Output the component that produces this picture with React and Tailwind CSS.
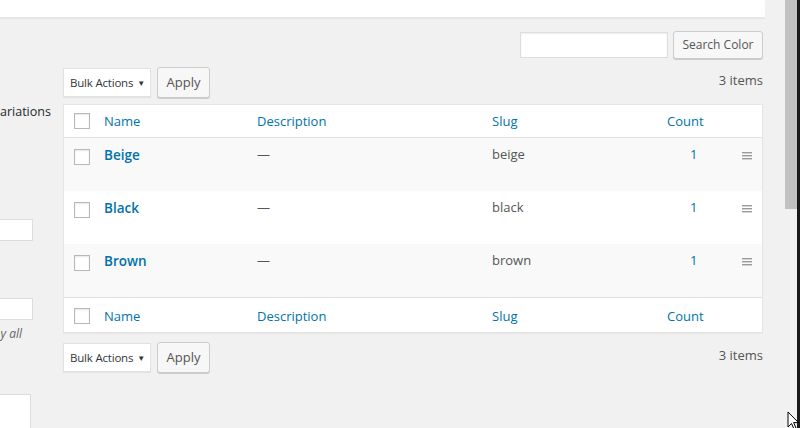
import React from 'react';

const font = { fontFamily: '"Open Sans", "Liberation Sans", sans-serif' };

const rows = [
    { name: 'Beige', slug: 'beige', count: 1, bg: 'bg-[#f9f9f9]' },
    { name: 'Black', slug: 'black', count: 1, bg: 'bg-white' },
    { name: 'Brown', slug: 'brown', count: 1, bg: 'bg-[#f9f9f9]' },
];

const Checkbox = () => (
    <span className="block w-4 h-4 bg-white border border-[#b4b9be] shadow-[inset_0_1px_2px_rgba(0,0,0,0.1)]" />
);

const Handle = () => (
    <svg width="10" height="8" viewBox="0 0 10 8" className="block">
        <rect x="0" y="0" width="10" height="1.4" fill="#9a9a9a" />
        <rect x="0" y="3" width="10" height="1.4" fill="#9a9a9a" />
        <rect x="0" y="6" width="10" height="1.4" fill="#9a9a9a" />
    </svg>
);

const HeadRow = ({ className }) => (
    <div className={`flex items-start bg-white ${className}`}>
        <div className="w-[40px] pl-[10px]"><Checkbox /></div>
        <div className="w-[153px] text-[#0073aa] leading-[16px]">Name</div>
        <div className="w-[235px] text-[#0073aa] leading-[16px]">Description</div>
        <div className="w-[175px] text-[#0073aa] leading-[16px]">Slug</div>
        <div className="w-[60px] text-[#0073aa] leading-[16px]">Count</div>
        <div className="flex-1" />
    </div>
);

const Toolbar = () => (
    <div className="flex items-center gap-[6px]">
        <div className="flex items-center justify-between w-[88px] h-[29px] bg-white border border-[#e2e2e2] shadow-[0_1px_1px_rgba(0,0,0,0.05)] pl-[6px] pr-[5px] text-[11.5px] tracking-[-0.2px] whitespace-nowrap text-[#32373c]">
            <span>Bulk Actions</span>
            <span className="text-[8px]">▼</span>
        </div>
        <div className="flex items-center justify-center w-[53px] h-[31px] bg-[#f7f7f7] border border-[#cccccc] rounded-[3px] shadow-[0_1px_0_#cccccc] text-[13px] text-[#555]">
            Apply
        </div>
    </div>
);

export default function App() {
    return (
        <div className="relative w-[800px] h-[428px] bg-[#f1f1f1] overflow-hidden flex text-[13px]" style={font}>
            <div className="w-[785px] flex flex-col">
                <div className="w-[765px] h-[18px] bg-white border-b border-[#e5e5e5] shadow-[0_1px_1px_rgba(0,0,0,0.04)] shrink-0" />
                <div className="flex">
                    <div className="w-[63px] shrink-0 flex flex-col text-[#23282d]">
                        <div className="h-[84px]" />
                        <div className="leading-[20px] text-[12.5px]">ariations</div>
                        <div className="h-[97px]" />
                        <div className="w-[33px] h-[22px] bg-white border border-[#dddddd] border-l-0" />
                        <div className="h-[57px]" />
                        <div className="w-[33px] h-[22px] bg-white border border-[#dddddd] border-l-0" />
                        <div className="italic text-[#666] text-[12px] leading-[28px] w-[22px] text-right">y all</div>
                        <div className="h-[46px]" />
                        <div className="w-[31px] h-[50px] bg-white border border-[#dddddd] border-l-0" />
                    </div>
                    <div className="w-[700px] shrink-0 flex flex-col">
                        <div className="flex justify-end items-center gap-[5px] mt-[13px] h-[28px]">
                            <div className="w-[148px] h-[26px] bg-white border border-[#dddddd] shadow-[inset_0_1px_2px_rgba(0,0,0,0.07)]" />
                            <div className="flex items-center justify-center w-[90px] h-[28px] bg-[#f7f7f7] border border-[#cccccc] rounded-[3px] shadow-[0_1px_0_#cccccc] text-[12px] text-[#555]">
                                Search Color
                            </div>
                        </div>
                        <div className="flex justify-between items-center mt-[8px]">
                            <Toolbar />
                            <span className="text-[#555] text-[13px] pb-[4px]">3 items</span>
                        </div>
                        <div className="mt-[6px] border border-[#e5e5e5] shadow-[0_1px_1px_rgba(0,0,0,0.04)]">
                            <HeadRow className="h-[33px] pt-[8px] border-b border-[#e1e1e1]" />
                            {rows.map((r) => (
                                <div key={r.name} className={`flex items-start h-[53px] ${r.bg}`}>
                                    <div className="w-[40px] pl-[10px] pt-[11px]"><Checkbox /></div>
                                    <div className="w-[153px] pt-[7px] text-[#0073aa] font-semibold text-[13.5px]">{r.name}</div>
                                    <div className="w-[235px] pt-[7px] text-[#555]">—</div>
                                    <div className="w-[175px] pt-[7px] text-[#555]">{r.slug}</div>
                                    <div className="w-[60px] pt-[7px] text-[#0073aa] pl-[23px]">{r.count}</div>
                                    <div className="flex-1 pt-[14px] pl-[15px]"><Handle /></div>
                                </div>
                            ))}
                            <HeadRow className="h-[35px] pt-[10px] border-t border-[#e1e1e1]" />
                        </div>
                        <div className="flex justify-between items-center mt-[9px]">
                            <Toolbar />
                            <span className="text-[#555] text-[13px] pb-[4px]">3 items</span>
                        </div>
                    </div>
                </div>
            </div>
            <div className="w-[15px] h-full flex">
                <div className="w-[12px] h-full flex flex-col bg-[#f1f1f1]">
                    <div className="h-[209px] bg-[#c1c1c1]" />
                </div>
                <div className="w-[3px] h-full bg-[#1a1a1a]" />
            </div>
            <svg className="absolute left-[787px] top-[411px]" width="13" height="20" viewBox="0 0 13 20">
                <path d="M1 1 L1 16 L4.5 12.5 L7 18 L9 17 L6.6 11.6 L11.5 11.6 Z" fill="#fff" stroke="#000" strokeWidth="1" />
            </svg>
        </div>
    );
}
